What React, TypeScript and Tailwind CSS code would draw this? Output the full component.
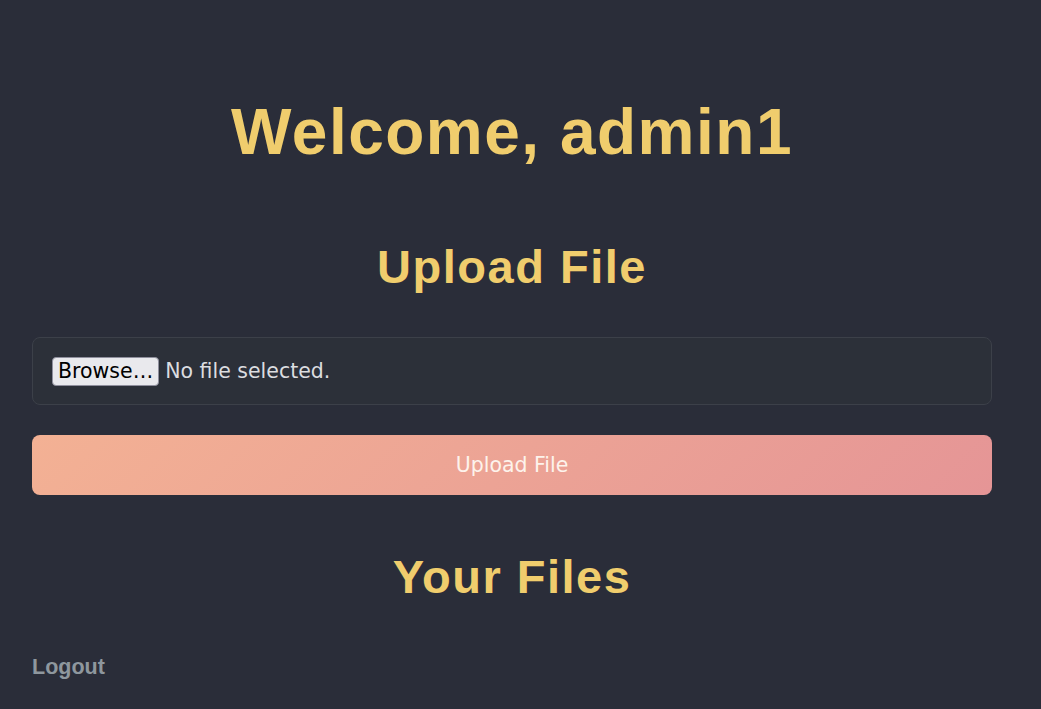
export default function App() {
  return (
    <div className="min-h-screen bg-[#2a2d39] px-8 font-['Liberation_Sans',Arial,sans-serif]">
      <div className="w-[960px] pt-[92px]">
        <h1 className="text-center text-[64px] font-bold leading-[80px] tracking-[1.5px] text-[#f0cd6d]">
          Welcome, admin1
        </h1>

        <h2 className="mt-[66px] text-center text-[47px] font-bold leading-[58px] tracking-[1.5px] text-[#f0cd6d]">
          Upload File
        </h2>

        <div className="mt-[41px] flex h-[68px] items-center rounded-lg border border-[#3c4049] bg-[#2c3039] px-[19px] font-['DejaVu_Sans',sans-serif] text-[20.5px]">
          <span className="flex h-[29px] items-center rounded-[4px] border border-[#8f8f9d] bg-[#e9e9ed] px-[5px] text-black">
            Browse…
          </span>
          <span className="ml-[6px] text-[#dcdde0]">No file selected.</span>
        </div>

        <button className="mt-[30px] flex h-[60px] w-full items-center justify-center rounded-lg bg-[linear-gradient(135deg,#f3b194,#e59596)] font-['DejaVu_Sans',sans-serif] text-[20.5px] text-[#fdf3ec]">
          Upload File
        </button>

        <h2 className="mt-[53px] text-center text-[47px] font-bold leading-[58px] tracking-[1.5px] text-[#f0cd6d]">
          Your Files
        </h2>

        <div className="mt-[45px] pb-8">
          <a className="text-[21.5px] font-bold text-[#8e979e]">Logout</a>
        </div>
      </div>
    </div>
  )
}
